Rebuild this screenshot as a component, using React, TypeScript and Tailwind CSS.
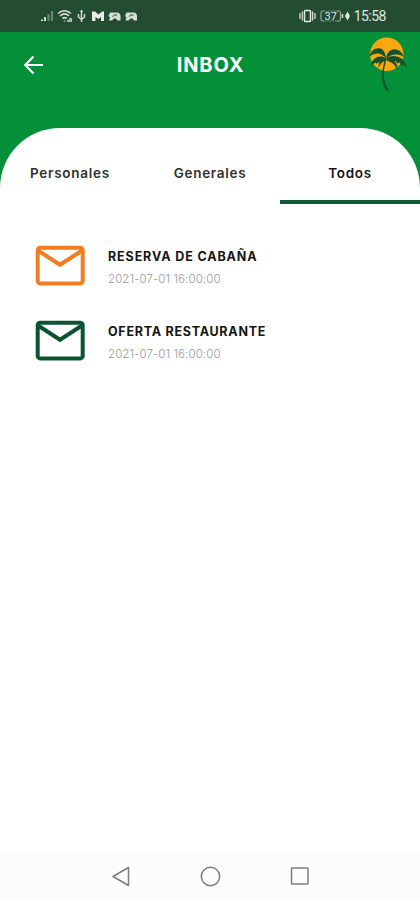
const messages = [
  { title: 'RESERVA DE CABAÑA', date: '2021-07-01 16:00:00', color: 'text-[#f07d22]', tracking: 'tracking-[0.88px]' },
  { title: 'OFERTA RESTAURANTE', date: '2021-07-01 16:00:00', color: 'text-[#0b5431]', tracking: 'tracking-[0.74px]' },
]

function StatusIcons() {
  return (
    <svg width="100" height="16" viewBox="0 0 100 16" fill="none" stroke="#d3ded5">
      <path d="M2 13v-1.500M5 13v-4" strokeWidth="2" />
      <path d="M8.500 13V6M12 13V3" strokeWidth="2" stroke="#6d8974" />
      <path d="M18 5.500c4-3.500 9-3.500 13 0M20 8c3-2.500 6.500-2.500 9 0M22.500 10.500c1.300-1 3-1 4.300 0" strokeWidth="1.600" />
      <path d="M24.500 12.500v1M27 13h5M29 11h3" strokeWidth="1.500" />
      <path d="M41.500 3v11M38.500 6v3l3 2.500 3-2.500V6" strokeWidth="1.400" />
      <path d="M41.500 1.500l-1.700 2.500h3.400z" fill="#d3ded5" stroke="none" />
      <path d="M52 3.500h3l3.500 3 3.500-3h2v9.500h-3V9l-2.500 2-3-2v4H52z" fill="#e7eee9" stroke="none" />
      <path d="M70 4.500h7c2 0 3.500 1.500 3.500 3.500v4.500h-3l-1.500-2h-2l-2 2h-3l1-3-1.500-1.500z" fill="#d3ded5" stroke="none" />
      <path d="M72.500 8.500l2-1.500H77" stroke="#234c31" strokeWidth="1" />
      <path d="M86.500 4.500h7c2 0 3.500 1.500 3.500 3.500v4.500h-3l-1.500-2h-2l-2 2h-3l1-3-1.500-1.500z" fill="#d3ded5" stroke="none" />
      <path d="M89 8.500L91 7h2.500" stroke="#234c31" strokeWidth="1" />
    </svg>
  )
}

function StatusBar() {
  return (
    <div className="h-8 bg-[#234c31] flex items-center justify-between pl-10 pr-[34px]">
      <StatusIcons />
      <div className="flex items-center text-[#dfe8e1]">
        <svg width="17" height="14" viewBox="0 0 17 14" fill="none" stroke="currentColor" strokeWidth="1.500">
          <path d="M1 4v6M3.300 2.500v9M13.700 2.500v9M16 4v6" strokeWidth="1.200" />
          <rect x="5.500" y="1.500" width="6" height="11" rx="0.800" />
        </svg>
        <svg className="ml-1" width="34" height="14" viewBox="0 0 34 14" fill="none" stroke="currentColor">
          <path d="M4 2H2.500C1.500 2 1 2.500 1 3.500v7c0 1 .5 1.500 1.500 1.500H4M17 2h2c1 0 1.500.5 1.500 1.500v7c0 1-.5 1.500-1.500 1.500h-2" strokeWidth="1" opacity="0.700" />
          <path d="M4 2h13M4 12h13" strokeWidth="1" opacity="0.300" />
          <text x="10.800" y="11" textAnchor="middle" fontSize="11" fontFamily="Roboto, sans-serif" fill="currentColor" stroke="none">37</text>
          <path d="M22.500 5v4" strokeWidth="1.400" />
          <path d="M27.500 2.500l-2.500 4.500 2.500 4.500L30 7z" fill="currentColor" stroke="none" />
        </svg>
        <span className="font-[Roboto,sans-serif] text-[14px] leading-none tracking-[-0.5px]">15:58</span>
      </div>
    </div>
  )
}

function PalmLogo() {
  return (
    <svg width="44" height="58" viewBox="0 0 44 58" fill="none">
      <circle cx="21.800" cy="18.300" r="16.700" fill="#fca610" />
      <g fill="#12522f">
        <path d="M21 22.500C20.500 16.500 18 12.300 14 12.200 9 12 5.500 15.500 4.500 20.500c2-1.200 4-2.300 6-2.700 4-.8 7.500.7 10.500 4.700z" />
        <path d="M21 22c-6-3.500-14-1.500-15.500 9 1.800-2.200 3.500-3.700 5.500-4.500l1 1.500 2-2.300 1.500 1.300 2-2.700 3.500-.8z" />
        <path d="M21 22.500c.8-5.500 4-9.500 8.500-9.300 4.500.2 8 3.300 9.200 7.600-2-1.200-4-2-6-2.300-4.200-.5-8.200.7-11.700 4z" />
        <path d="M21.500 22c6-4 18.500-2.500 20.300 10.500-1.500-2-2.600-3.200-4-4.200l-1.300 1.700-2-3.700-1.800 1.200-2.500-2.700-1.700 1.200-3-1.800z" />
        <path d="M21.500 21.500c6 .5 11.500 4.500 10.700 12-1.600-3.500-3.300-5.300-5.200-6.500-1.800-1.200-3.500-2-5.500-2.500z" />
        <path d="M20.500 22c-4.500 1-7.500 4.500-6.800 10 1-3 2.300-4.500 3.500-5.500l2.800-2z" />
        <path d="M19.800 22l1.500.3c-.5 6-3 10.500-2.500 17.200.4 6.500 2.500 11.500 5.700 15l-3.500-.2c-2.500-4-4-9-4-14.800.1-7 2.300-11.500 2.800-17.500z" />
      </g>
    </svg>
  )
}

function Envelope() {
  return (
    <svg width="50" height="41" viewBox="0 0 50 41" fill="none" stroke="currentColor" strokeWidth="4" strokeLinejoin="round">
      <rect x="2.700" y="2.700" width="45" height="35.700" rx="2.500" />
      <path d="M3 5.500l22 14.300L47 5.500" strokeLinejoin="miter" />
    </svg>
  )
}

export default function App() {
  return (
    <main className="w-[420px] h-[900px] flex flex-col overflow-hidden bg-white font-[Inter,sans-serif]">
      <StatusBar />
      <div className="bg-[#039038] flex-1 flex flex-col">
        <header className="h-24 flex items-start justify-between pl-[23px] pr-[11px]">
          <svg className="mt-[23px]" width="21" height="20" viewBox="0 0 21 20" fill="none" stroke="white" strokeWidth="2.200">
            <path d="M20 10H2.500M10.500 1.500L2.300 10l8.200 8.500" />
          </svg>
          <h1 className="mt-[21px] ml-[12px] text-[20px] leading-6 font-bold tracking-[0.9px] text-white">INBOX</h1>
          <div className="mt-1">
            <PalmLogo />
          </div>
        </header>
        <section className="flex-1 bg-white rounded-t-[60px]">
          <nav className="h-[76px] grid grid-cols-3 text-[13.500px] leading-5 font-semibold text-[#303030] text-center">
            <span className="pt-[35px] tracking-[0.75px]">Personales</span>
            <span className="pt-[35px] tracking-[0.7px]">Generales</span>
            <span className="pt-[35px] tracking-[0.7px] text-[#151515] border-b-4 border-[#115b38]">Todos</span>
          </nav>
          <ul className="pt-[41px] pl-[35px]">
            {messages.map((message) => (
              <li key={message.title} className="h-[75px] flex items-start">
                <span className={message.color}>
                  <Envelope />
                </span>
                <div className="ml-[23px] pt-1">
                  <h2 className={`text-[12.500px] leading-4 font-bold text-[#151515] ${message.tracking}`}>{message.title}</h2>
                  <p className="mt-[6px] text-[11.500px] leading-4 font-light tracking-[0.1px] text-[#989898]">{message.date}</p>
                </div>
              </li>
            ))}
          </ul>
        </section>
      </div>
      <footer className="h-12 bg-[#fcfcfc] flex items-center pl-[111px]">
        <svg width="200" height="22" viewBox="0 0 200 22" fill="none" stroke="#7d7d7d" strokeWidth="1.500" strokeLinejoin="round">
          <path d="M17.500 2.500v18L2 11.500z" />
          <circle cx="99.500" cy="11.500" r="9.200" />
          <rect x="180.500" y="3" width="16.500" height="16" rx="0.500" />
        </svg>
      </footer>
    </main>
  )
}
